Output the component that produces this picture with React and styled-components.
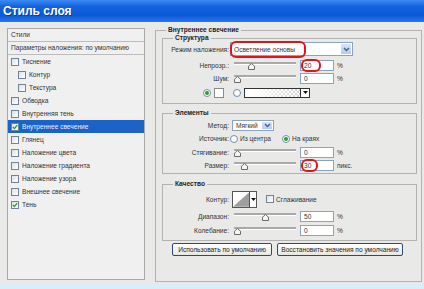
import React from 'react'
import styled, { createGlobalStyle } from 'styled-components'

const GlobalStyle = createGlobalStyle`
  html, body { margin: 0; padding: 0; }
  body {
    background: #e9e9e7;
    font-family: 'Liberation Sans', Arial, sans-serif;
  }
  * { box-sizing: border-box; }
`

const Window = styled.div`
  width: 424px;
  height: 289px;
  display: flex;
  flex-direction: column;
  background: #e9e9e7;
  overflow: hidden;
`

const TitleBar = styled.div`
  height: 22px;
  flex: none;
  display: flex;
  align-items: center;
  padding-left: 3px;
  background: linear-gradient(to bottom, #3d8af3 0%, #1362de 30%, #0b59d7 70%, #2a78ec 100%);
`

const Title = styled.h1`
  margin: 0;
  font-size: 12px;
  font-weight: bold;
  color: #fff;
  text-shadow: 1px 1px 0 rgba(0, 0, 50, 0.35);
`

const Body = styled.div`
  flex: 1;
  display: flex;
  align-items: flex-start;
  gap: 10px;
  padding: 4px 0 0 7px;
`

const BottomStrip = styled.div`
  height: 5px;
  flex: none;
  background: #d8eef9;
`

/* ---------- left list ---------- */

const StylesList = styled.div`
  width: 138px;
  height: 252px;
  margin-top: 2px;
  border: 1px solid #a9a9a9;
  background: #f0f0f0;
  font-size: 6.6px;
  color: #333;
`

const ListHeader = styled.div`
  height: 13px;
  line-height: 12px;
  padding-left: 3px;
  border-bottom: 1px solid #bcbcbc;
`

const ListItem = styled.div`
  height: 13px;
  display: flex;
  align-items: center;
  gap: 3px;
  padding-left: ${p => (p.$nested ? 10 : 3)}px;
  background: ${p => (p.$active ? '#1c63c7' : 'transparent')};
  color: ${p => (p.$active ? '#e4edff' : 'inherit')};
`

const Box = styled.span`
  width: 8px;
  height: 8px;
  flex: none;
  display: flex;
  align-items: center;
  justify-content: center;
  border: 1px solid #6f8499;
  background: linear-gradient(135deg, #dde1e4, #ffffff);
`

const CheckBox = ({ checked }) => (
  <Box>
    {checked && (
      <svg width="6" height="6" viewBox="0 0 6 6">
        <path d="M0.8 3 L2.4 4.6 L5.2 1.2" fill="none" stroke="#1f9a2a" strokeWidth="1.3" />
      </svg>
    )}
  </Box>
)

const items = [
  { label: 'Тиснение' },
  { label: 'Контур', nested: true },
  { label: 'Текстура', nested: true },
  { label: 'Обводка' },
  { label: 'Внутренняя тень' },
  { label: 'Внутреннее свечение', active: true, checked: true },
  { label: 'Глянец' },
  { label: 'Наложение цвета' },
  { label: 'Наложение градиента' },
  { label: 'Наложение узора' },
  { label: 'Внешнее свечение' },
  { label: 'Тень', checked: true },
]

/* ---------- right panel ---------- */

const Panel = styled.fieldset`
  width: 267px;
  height: 256px;
  margin: 0;
  padding: 0 4px 0 6px;
  border: 1px solid #b2b2b2;
  min-inline-size: 0;
  font-size: 6.6px;
  color: #333;
`

const Legend = styled.legend`
  margin-left: ${p => p.$offset}px;
  padding: 0 2px;
  font-size: 6.6px;
  line-height: 8px;
  font-weight: bold;
  color: #222;
`

const Group = styled.fieldset`
  margin: ${p => p.$mt}px 0 0;
  height: ${p => p.$h}px;
  padding: 0 4px 0 0;
  border: 1px solid #b2b2b2;
  min-inline-size: 0;
`

const Row = styled.div`
  display: flex;
  align-items: center;
  height: ${p => p.$h}px;
  margin-top: ${p => p.$mt || 0}px;
  padding-left: ${p => p.$pad || 0}px;
  white-space: nowrap;
`

const Label = styled.span`
  width: 66px;
  flex: none;
  text-align: right;
`

const SelectBox = styled.div`
  position: relative;
  display: flex;
  align-items: center;
  width: ${p => p.$w}px;
  height: ${p => p.$h}px;
  margin-left: ${p => p.$ml}px;
  padding-left: 3px;
  border: 1px solid #8aa4bf;
  background: #fff;
`

const DropButton = styled.span`
  margin-left: auto;
  width: 12px;
  height: 100%;
  display: flex;
  align-items: center;
  justify-content: center;
  border: 1px solid #fff;
  background: linear-gradient(#d6e4fd, #b2cbf6);
`

const Select = ({ w, h, ml, children, mark }) => (
  <SelectBox $w={w} $h={h} $ml={ml}>
    {children}
    <DropButton>
      <svg width="7" height="5" viewBox="0 0 7 5">
        <path d="M1 1 L3.5 3.6 L6 1" fill="none" stroke="#4a5f86" strokeWidth="1.4" />
      </svg>
    </DropButton>
    {mark && <RedMark $l={-1} $t={-2} $w={76} $h={17} />}
  </SelectBox>
)

const RedMark = styled.span`
  position: absolute;
  left: ${p => p.$l}px;
  top: ${p => p.$t}px;
  width: ${p => p.$w}px;
  height: ${p => p.$h}px;
  border: 2px solid #e3121b;
  border-radius: 6px;
`

const SliderWrap = styled.div`
  position: relative;
  align-self: flex-start;
  width: 62px;
  height: 9px;
  margin: 3px 0 0 5px;
`

const Track = styled.div`
  height: 3px;
  background: #a9a9a9;
  border-bottom: 1px solid #fff;
`

const Thumb = styled.svg`
  position: absolute;
  top: 1px;
`

const Slider = ({ pos }) => (
  <SliderWrap>
    <Track />
    <Thumb width="7" height="7" viewBox="0 0 7 7" style={{ left: `${pos * 55}px` }}>
      <path d="M3.5 0.5 L6.5 3.2 L6.5 6.5 L0.5 6.5 L0.5 3.2 Z" fill="#f5f5f5" stroke="#6a6a6a" />
    </Thumb>
  </SliderWrap>
)

const Field = styled.span`
  position: relative;
  width: 34px;
  height: 11px;
  margin-left: 4px;
  padding-left: 3px;
  line-height: 9px;
  border: 1px solid #8aa4bf;
  background: #fff;
`

const Unit = styled.span`
  margin-left: 3px;
`

const SliderRow = ({ label, pos, value, unit = '%', mark, h, mt }) => (
  <Row $h={h} $mt={mt}>
    <Label>{label}</Label>
    <Slider pos={pos} />
    <Field>
      {value}
      {mark && <RedMark $l={0} $t={-2} $w={mark} $h={13} />}
    </Field>
    <Unit>{unit}</Unit>
  </Row>
)

const RadioDot = styled.span`
  width: 8px;
  height: 8px;
  flex: none;
  margin-left: ${p => p.$ml || 0}px;
  border-radius: 50%;
  border: 1px solid #6f8fb0;
  background: #fff;
  display: flex;
  align-items: center;
  justify-content: center;
  &::after {
    content: '';
    display: ${p => (p.$on ? 'block' : 'none')};
    width: 4px;
    height: 4px;
    border-radius: 50%;
    background: #23a02d;
  }
`

const Option = styled.span`
  display: flex;
  align-items: center;
  gap: 2px;
  width: ${p => (p.$w ? `${p.$w}px` : 'auto')};
  margin-left: ${p => p.$ml || 0}px;
`

const Swatch = styled.span`
  width: 10px;
  height: 10px;
  margin-left: 3px;
  border: 1px solid #8c8c8c;
  background: #fff;
`

const GradientBox = styled.span`
  display: flex;
  width: 66px;
  height: 10px;
  margin-left: 3px;
  border: 1px solid #333;
`

const GradientFill = styled.span`
  flex: 1;
  background:
    linear-gradient(to right, #fff 15%, rgba(255, 255, 255, 0) 100%),
    conic-gradient(#d0d0d0 25%, #fff 0 50%, #d0d0d0 0 75%, #fff 0) 0 0 / 4px 4px;
`

const ArrowCell = styled.span`
  width: 9px;
  display: flex;
  align-items: center;
  justify-content: center;
  border-left: 1px solid #333;
  background: #fff;
`

const DownArrow = () => (
  <svg width="5" height="3" viewBox="0 0 5 3">
    <path d="M0 0 H5 L2.5 3 Z" fill="#111" />
  </svg>
)

const ContourBox = styled.span`
  display: flex;
  width: 25px;
  height: 17px;
  margin-left: 3px;
  border: 1px solid #555;
  background: #fff;
`

const ContourArrow = styled.span`
  width: 7px;
  display: flex;
  align-items: center;
  justify-content: center;
  border-left: 1px solid #555;
`

const Buttons = styled.div`
  display: flex;
  gap: 5px;
  margin: 2px 0 0 10px;
`

const Button = styled.button`
  width: ${p => p.$w}px;
  height: 13px;
  padding: 0;
  white-space: nowrap;
  border: 1px solid #2a4b72;
  border-radius: 2px;
  background: linear-gradient(#ffffff, #e6e6e1);
  font: 6.6px 'Liberation Sans', Arial, sans-serif;
  color: #222;
`

export default function App() {
  return (
    <>
      <GlobalStyle />
      <Window>
        <TitleBar>
          <Title>Стиль слоя</Title>
        </TitleBar>
        <Body>
          <StylesList>
            <ListHeader>Стили</ListHeader>
            <ListHeader>Параметры наложения: по умолчанию</ListHeader>
            {items.map(it => (
              <ListItem key={it.label} $nested={it.nested} $active={it.active}>
                <CheckBox checked={it.checked} />
                {it.label}
              </ListItem>
            ))}
          </StylesList>

          <Panel>
            <Legend $offset={4}>Внутреннее свечение</Legend>

            <Group $mt={0} $h={70}>
              <Legend $offset={10}>Структура</Legend>
              <Row $h={14}>
                <Label>Режим наложения:</Label>
                <Select w={123} h={14} ml={1} mark>Осветление основы</Select>
              </Row>
              <SliderRow label="Непрозр.:" pos={0.25} value="20" mark={20} h={13} mt={3} />
              <SliderRow label="Шум:" pos={0} value="0" h={13} />
              <Row $h={13} $mt={1} $pad={40}>
                <RadioDot $on />
                <Swatch />
                <RadioDot $ml={9} />
                <GradientBox>
                  <GradientFill />
                  <ArrowCell><DownArrow /></ArrowCell>
                </GradientBox>
              </Row>
            </Group>

            <Group $mt={5} $h={65}>
              <Legend $offset={10}>Элементы</Legend>
              <Row $h={14} $mt={1}>
                <Label>Метод:</Label>
                <Select w={42} h={11} ml={3}>Мягкий</Select>
              </Row>
              <Row $h={13}>
                <Label>Источник:</Label>
                <Option $w={52} $ml={1}><RadioDot />Из центра</Option>
                <Option><RadioDot $on />На краях</Option>
              </Row>
              <SliderRow label="Стягивание:" pos={0} value="0" h={12} mt={1} />
              <SliderRow label="Размер:" pos={0.12} value="30" unit="пикс." mark={17} h={12} mt={1} />
            </Group>

            <Group $mt={6} $h={61}>
              <Legend $offset={10}>Качество</Legend>
              <Row $h={18} $mt={2}>
                <Label>Контур:</Label>
                <ContourBox>
                  <svg width="17" height="15" viewBox="0 0 17 15">
                    <polygon points="0,15 17,0 17,15" fill="#9e9e9e" />
                  </svg>
                  <ContourArrow><DownArrow /></ContourArrow>
                </ContourBox>
                <Option $ml={9}><CheckBox />Сглаживание</Option>
              </Row>
              <SliderRow label="Диапазон:" pos={0.5} value="50" h={13} mt={2} />
              <SliderRow label="Колебание:" pos={0} value="0" h={13} mt={1} />
            </Group>

            <Buttons>
              <Button $w={100}>Использовать по умолчанию</Button>
              <Button $w={126}>Восстановить значения по умолчанию</Button>
            </Buttons>
          </Panel>
        </Body>
        <BottomStrip />
      </Window>
    </>
  )
}
